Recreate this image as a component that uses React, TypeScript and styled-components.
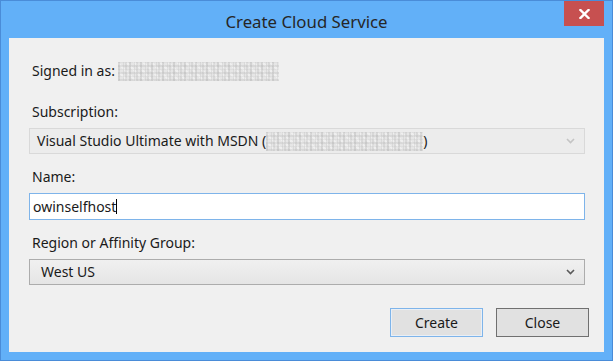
import React from "react";
import styled, { createGlobalStyle } from "styled-components";

const GlobalStyle = createGlobalStyle`
  html, body {
    margin: 0;
    padding: 0;
    background: #62b0f8;
  }
  * {
    box-sizing: border-box;
  }
`;

const App = () => {
  return (
    <>
      <GlobalStyle />
      <Window>
        <TitleBar>
          <span />
          <Title>Create Cloud Service</Title>
          <CloseButton>
            <svg width="11" height="10" viewBox="0 0 11 10">
              <path
                d="M1.5 1 L9.5 9 M9.5 1 L1.5 9"
                stroke="#ffffff"
                strokeWidth="2.4"
                strokeLinecap="square"
              />
            </svg>
          </CloseButton>
        </TitleBar>

        <Client>
          <Form>
            <SignedRow>
              <Label>Signed in as:</Label>
              <Blur w={161} h={19} />
            </SignedRow>

            <Field>
              <Label>Subscription:</Label>
              <Combo disabled>
                <ComboText pad={7}>
                  Visual Studio Ultimate with MSDN (
                  <Blur w={157} h={19} />)
                </ComboText>
                <Chevron color="#c4c4c4" />
              </Combo>
            </Field>

            <Field>
              <Label>Name:</Label>
              <TextBox>
                owinselfhost
                <Caret />
              </TextBox>
            </Field>

            <Field>
              <Label>Region or Affinity Group:</Label>
              <Combo>
                <ComboText pad={11}>West US</ComboText>
                <Chevron color="#5a5a5a" />
              </Combo>
            </Field>
          </Form>

          <ButtonRow>
            <DialogButton isDefault>Create</DialogButton>
            <DialogButton>Close</DialogButton>
          </ButtonRow>
        </Client>
      </Window>
    </>
  );
};

const Chevron = ({ color }: { color: string }) => (
  <ChevronBox>
    <svg width="9" height="6" viewBox="0 0 9 6">
      <path
        d="M1 1 L4.5 4.5 L8 1"
        fill="none"
        stroke={color}
        strokeWidth="1.6"
      />
    </svg>
  </ChevronBox>
);

export default App;

const Window = styled.div`
  width: 613px;
  height: 361px;
  border: 1px solid #4a8cd8;
  background: #62b0f8;
  display: flex;
  flex-direction: column;
  font-family: "Noto Sans", "Open Sans", sans-serif;
  color: #1a1a1a;
`;

const TitleBar = styled.div`
  height: 37px;
  display: grid;
  grid-template-columns: 1fr auto 1fr;
  padding: 0 8px;
`;

const Title = styled.div`
  font-size: 16.8px;
  color: #262626;
  line-height: 37px;
  padding-top: 2px;
`;

const CloseButton = styled.div`
  justify-self: end;
  width: 40px;
  height: 25px;
  background: #c75050;
  display: flex;
  align-items: center;
  justify-content: center;
`;

const Client = styled.div`
  flex: 1;
  margin: 0 8px 8px 8px;
  background: #f0f0f0;
  padding: 23px 19px 0 20px;
  display: flex;
  flex-direction: column;
`;

const Form = styled.div`
  display: flex;
  flex-direction: column;
  gap: 13px;
`;

const SignedRow = styled.div`
  display: flex;
  align-items: center;
  gap: 3px;
  height: 20px;
  margin-bottom: 8px;
`;

const Field = styled.div`
  display: flex;
  flex-direction: column;
  gap: 6px;
`;

const Label = styled.div`
  font-size: 14px;
  line-height: 20px;
  padding-left: 3px;
  white-space: nowrap;
`;

const Blur = styled.span<{ w: number; h: number }>`
  display: inline-block;
  width: ${(p) => p.w}px;
  height: ${(p) => p.h}px;
  vertical-align: middle;
  background-color: #e6e6e6;
  background-image: repeating-linear-gradient(
      90deg,
      rgba(165, 165, 165, 0.3) 0 2px,
      transparent 2px 5px,
      rgba(195, 195, 195, 0.35) 5px 6px,
      transparent 6px 7px,
      rgba(175, 175, 175, 0.25) 7px 9px,
      transparent 9px 11px
    ),
    repeating-linear-gradient(
      0deg,
      rgba(185, 185, 185, 0.3) 0 2px,
      transparent 2px 4px,
      rgba(205, 205, 205, 0.3) 4px 5px,
      transparent 5px 7px
    ),
    repeating-linear-gradient(
      45deg,
      rgba(255, 255, 255, 0.35) 0 2px,
      transparent 2px 6px
    );
`;

const Combo = styled.div<{ disabled?: boolean }>`
  height: 26px;
  display: flex;
  align-items: center;
  border: 1px solid ${(p) => (p.disabled ? "#d9d9d9" : "#acacac")};
  background: ${(p) =>
    p.disabled ? "#ececec" : "linear-gradient(#f0f0f0, #e5e5e5)"};
`;

const ComboText = styled.div<{ pad: number }>`
  flex: 1;
  font-size: 14px;
  line-height: 20px;
  padding-left: ${(p) => p.pad}px;
  white-space: nowrap;
  display: flex;
  align-items: center;
`;

const ChevronBox = styled.div`
  width: 24px;
  display: flex;
  justify-content: center;
  padding-right: 3px;
`;

const TextBox = styled.div`
  height: 27px;
  border: 1px solid #7eb4ea;
  background: #ffffff;
  font-size: 14px;
  line-height: 20px;
  padding: 2px 3px;
  display: flex;
  align-items: center;
`;

const Caret = styled.span`
  display: inline-block;
  width: 1px;
  height: 15px;
  background: #000000;
`;

const ButtonRow = styled.div`
  display: flex;
  justify-content: flex-end;
  gap: 13px;
  margin-top: 23px;
  margin-right: -4px;
`;

const DialogButton = styled.div<{ isDefault?: boolean }>`
  width: 93px;
  height: 29px;
  border: 1px solid ${(p) => (p.isDefault ? "#7eb4ea" : "#707070")};
  background: #e1e1e1;
  font-size: 14px;
  display: flex;
  align-items: center;
  justify-content: center;
  box-shadow: ${(p) => (p.isDefault ? "inset 0 0 0 1px #e9eff6" : "none")};
`;
